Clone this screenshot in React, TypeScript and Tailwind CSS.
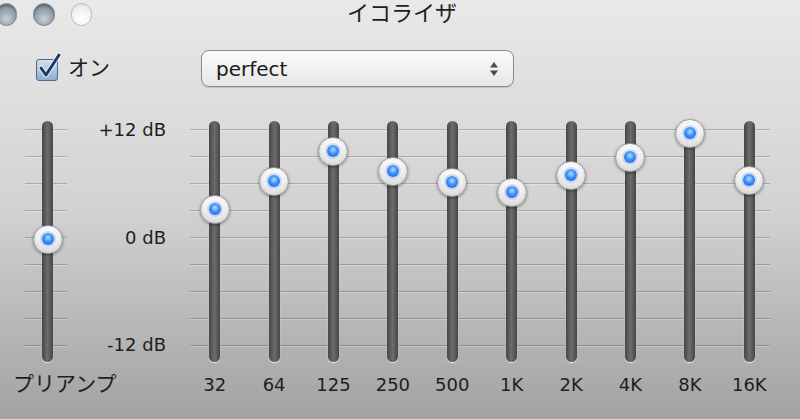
import React from "react";

type Band = { label: string; y: number };

// y = knob centre, in px from the top of the slider track
const bands: Band[] = [
  { label: "32", y: 88 },
  { label: "64", y: 60 },
  { label: "125", y: 30 },
  { label: "250", y: 50 },
  { label: "500", y: 61 },
  { label: "1K", y: 71 },
  { label: "2K", y: 54 },
  { label: "4K", y: 36 },
  { label: "8K", y: 12 },
  { label: "16K", y: 59 },
];

const PREAMP_Y = 118;

function Knob({ y }: { y: number }) {
  return (
    <div
      className="absolute left-1/2 -translate-x-1/2 w-[30px] h-[29px] rounded-full border border-[#989898] bg-[radial-gradient(circle_at_50%_30%,#ffffff,#f1f1f1_45%,#cbcbcb)] shadow-[0_1px_3px_rgba(0,0,0,0.4)] flex items-center justify-center"
      style={{ top: y - 14.5 }}
    >
      <div className="w-[12px] h-[12px] rounded-full bg-[radial-gradient(circle_at_50%_40%,#b5e2ff,#3a8cff_45%,#1b56d6)] shadow-[0_0_0_2px_rgba(170,195,230,0.55)]" />
    </div>
  );
}

function Slider({ y }: { y: number }) {
  return (
    <div className="relative h-[241px] w-[11px]">
      <div className="h-full w-full rounded-full bg-[linear-gradient(to_right,#464646,#6c6c6c_50%,#464646)] shadow-[0_1px_1px_rgba(255,255,255,0.75)]" />
      <Knob y={y} />
    </div>
  );
}

function GridLines({ className }: { className: string }) {
  return (
    <div className={`absolute top-[8px] h-[217px] flex flex-col justify-between ${className}`}>
      {Array.from({ length: 9 }).map((_, i) => (
        <div key={i} className="h-px bg-black/20 shadow-[0_1px_0_rgba(255,255,255,0.25)]" />
      ))}
    </div>
  );
}

function TrafficLight({ active }: { active: boolean }) {
  return active ? (
    <div className="w-[23px] h-[23px] rounded-full border border-[#7d8790] bg-[radial-gradient(circle_at_50%_70%,#c6d0d8,#9aa6b0_45%,#6f7b86)] shadow-[inset_0_2px_2px_rgba(0,0,0,0.25)]" />
  ) : (
    <div className="w-[23px] h-[23px] rounded-full border border-[#b9b9b9] bg-[radial-gradient(circle_at_50%_70%,#ffffff,#f2f2f2_55%,#dddddd)]" />
  );
}

export default function App() {
  return (
    <div
      className="w-[800px] h-[419px] overflow-hidden bg-gradient-to-b from-[#e9e9e9] via-[#d2d2d2] to-[#a2a2a2] text-[#1e1e1e]"
      style={{ fontFamily: "'DejaVu Sans', 'Noto Sans CJK JP', sans-serif" }}
    >
      {/* title bar */}
      <div className="h-[28px] flex items-center">
        <div className="w-[96px] -ml-[4px] flex items-center gap-[16px] pt-[1px]">
          <TrafficLight active />
          <TrafficLight active />
          <TrafficLight active={false} />
        </div>
        <div className="flex-1 text-center text-[22px] leading-[28px] pl-[4px]">イコライザ</div>
        <div className="w-[92px]" />
      </div>

      {/* on switch + preset menu */}
      <div className="mt-[22px] h-[37px] flex items-center pl-[36px]">
        <div className="w-[165px] flex items-center">
          <div className="relative w-[22px] h-[22px] mt-[3px]">
            <div className="w-full h-full rounded-[3px] border border-[#4a6a92] bg-gradient-to-b from-[#d3e0ee] to-[#8eafd2]" />
            <svg className="absolute -top-[5px] left-0 overflow-visible" width="26" height="26" viewBox="0 0 26 26">
              <path d="M5 14 L10 21 L23 1" fill="none" stroke="#ffffff" strokeWidth="5" strokeLinecap="round" strokeLinejoin="round" opacity="0.7" />
              <path d="M5 14 L10 21 L23 1" fill="none" stroke="#1d3a62" strokeWidth="3" strokeLinecap="round" strokeLinejoin="round" />
            </svg>
          </div>
          <span className="ml-[10px] text-[21px] leading-none">オン</span>
        </div>
        <div className="w-[313px] h-[37px] rounded-[8px] border border-[#8c8c8c] bg-gradient-to-b from-[#fbfbfb] to-[#e6e6e6] shadow-[0_1px_1px_rgba(0,0,0,0.15)] flex items-center pl-[14px] pr-[14px]">
          <span className="flex-1 text-[20px] leading-none text-[#1a1a1a]">perfect</span>
          <svg width="10" height="16" viewBox="0 0 10 16">
            <path d="M5 1 L9 6.5 L1 6.5 Z" fill="#4a4a4a" />
            <path d="M5 15 L9 9.5 L1 9.5 Z" fill="#4a4a4a" />
          </svg>
        </div>
      </div>

      {/* sliders */}
      <div className="mt-[34px] flex pl-[18px]">
        <div className="relative w-[60px] flex flex-col items-center">
          <GridLines className="left-[7px] w-[42px]" />
          <div className="w-[11px] ml-[-1px]">
            <Slider y={PREAMP_Y} />
          </div>
          <div className="self-start -ml-[5px] mt-[10px] text-[21px] leading-[24px] whitespace-nowrap">プリアンプ</div>
        </div>

        <div className="w-[88px] h-[235px] -mt-[1px] flex flex-col justify-between items-end text-[18px] leading-[20px]">
          <div>+12 dB</div>
          <div>0 dB</div>
          <div>-12 dB</div>
        </div>

        <div className="relative ml-[19px] w-[594px] grid grid-cols-10">
          <GridLines className="left-[5px] right-[9px]" />
          {bands.map((b) => (
            <div key={b.label} className="flex flex-col items-center">
              <Slider y={b.y} />
              <div className="mt-[13px] text-[18px] leading-[20px]">{b.label}</div>
            </div>
          ))}
        </div>
      </div>
    </div>
  );
}
